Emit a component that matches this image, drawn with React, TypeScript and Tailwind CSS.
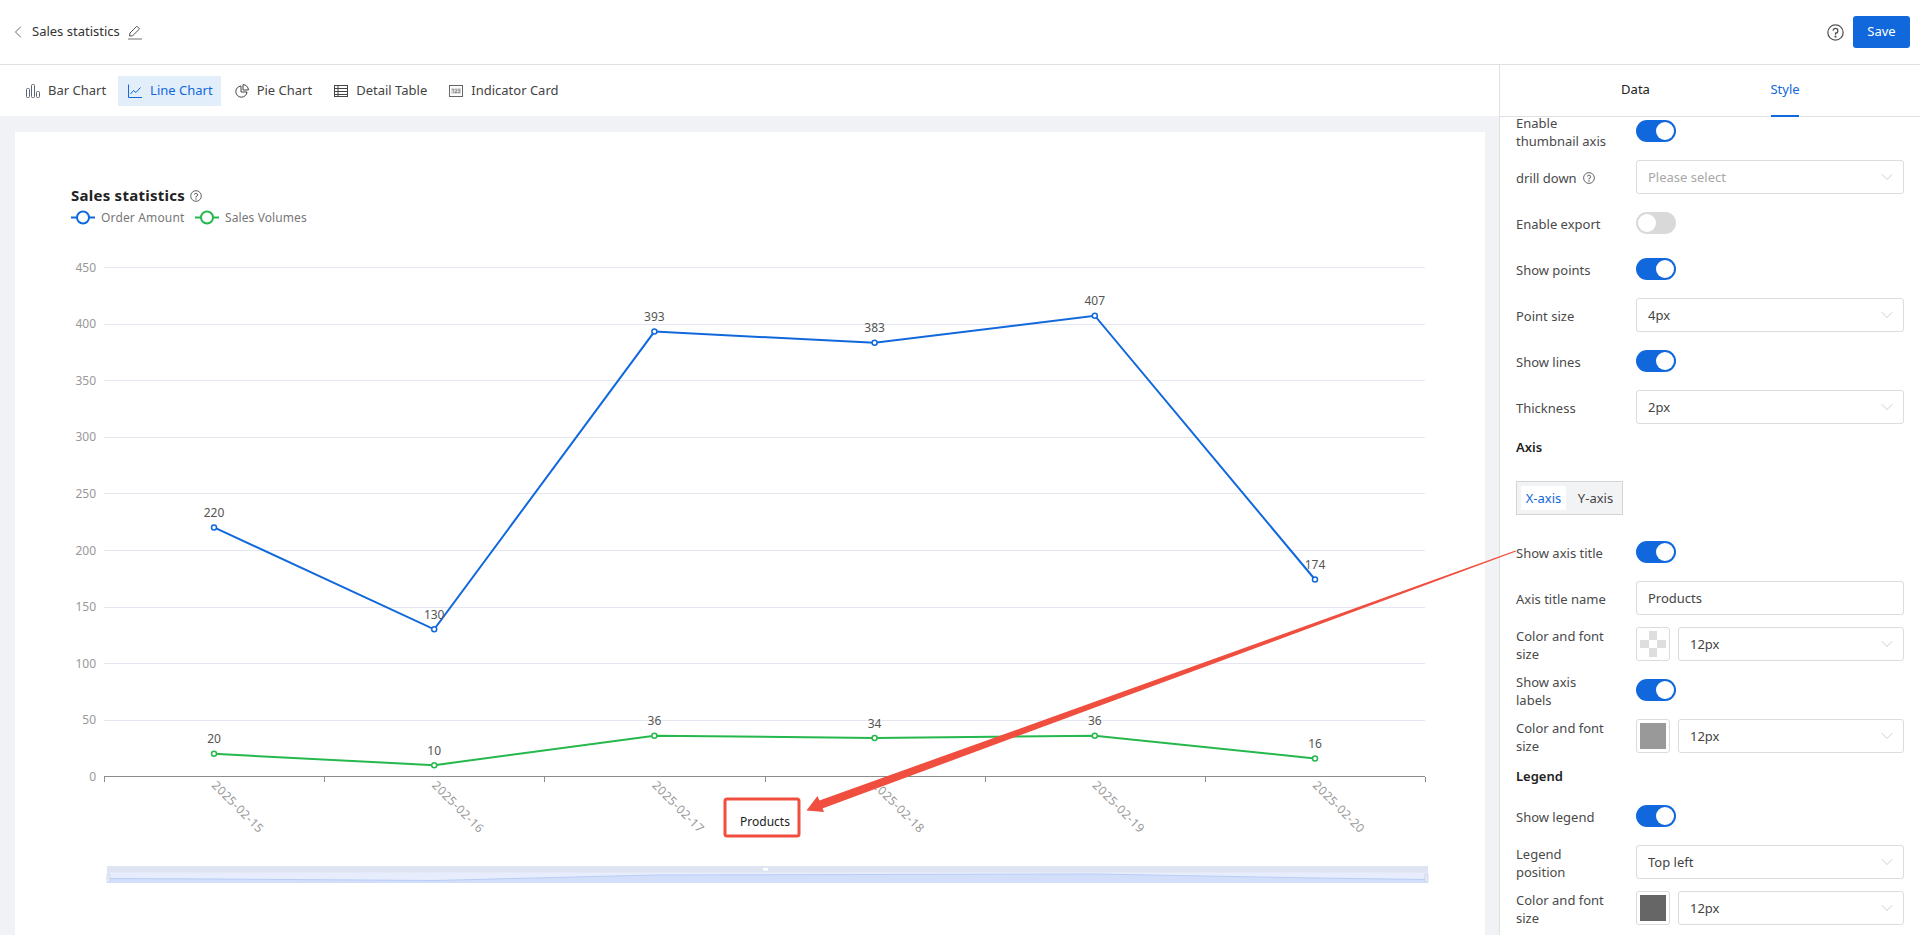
import { ChevronDown, ChevronLeft } from "lucide-react";
import type { ReactNode } from "react";

const BLUE = "#1068dc";
const GREEN = "#25b84c";
const FONT = "'Noto Sans', sans-serif";

const ORDER = [220, 130, 393, 383, 407, 174];
const SALES = [20, 10, 36, 34, 36, 16];
const DATES = ["2025-02-15", "2025-02-16", "2025-02-17", "2025-02-18", "2025-02-19", "2025-02-20"];
const TICKS = [0, 50, 100, 150, 200, 250, 300, 350, 400, 450];

const yAt = (v: number) => 776.5 - (v * 509.5) / 450;
const xAt = (i: number) => 214 + i * 220.2;
const points = (vals: number[]) => vals.map((v, i) => `${xAt(i)},${yAt(v)}`).join(" ");

function BarIcon() {
  return (
    <svg width="14" height="14" viewBox="0 0 14 14" fill="none" stroke="#5b6573" strokeWidth="1">
      <rect x="0.5" y="4.5" width="3" height="9" rx="1" />
      <rect x="5.5" y="0.5" width="3" height="13" rx="1" />
      <rect x="10.5" y="7.5" width="3" height="6" rx="1" />
    </svg>
  );
}

function LineIcon() {
  return (
    <svg width="14" height="14" viewBox="0 0 14 14" fill="none" stroke={BLUE} strokeWidth="1">
      <path d="M0.5 0.5V13.5H14" />
      <path d="M2.5 10L5.5 6.5L8 8.5L12.5 3.5" />
    </svg>
  );
}

function PieIcon() {
  return (
    <svg width="14" height="14" viewBox="0 0 14 14" fill="none" stroke="#444" strokeWidth="1">
      <path d="M6 2A5.6 5.6 0 1 0 12 8H6Z" />
      <path d="M8 0.6A5.5 5.5 0 0 1 13.4 6H8Z" />
    </svg>
  );
}

function TableIcon() {
  return (
    <svg width="14" height="14" viewBox="0 0 14 14" fill="none" stroke="#444" strokeWidth="1">
      <rect x="0.5" y="1.5" width="13" height="11" />
      <path d="M0.5 4.5H13.5M0.5 7.5H13.5M0.5 10.5H13.5M4 1.5V12.5" />
    </svg>
  );
}

function CardIcon() {
  return (
    <svg width="14" height="14" viewBox="0 0 14 14" fill="none">
      <rect x="0.5" y="1.5" width="13" height="11" stroke="#666" />
      <rect x="2" y="4" width="10" height="6" fill="#ddd" />
      <text x="7" y="9" textAnchor="middle" fontSize="5" fill="#555" fontFamily={FONT}>123</text>
    </svg>
  );
}

function Help({ size = 12 }: { size?: number }) {
  return (
    <svg width={size} height={size} viewBox="0 0 16 16" fill="none" stroke="#555" strokeWidth="1.2" className="shrink-0">
      <circle cx="8" cy="8" r="7.2" />
      <path d="M5.8 6.2A2.2 2.2 0 1 1 8 8.6V10" />
      <circle cx="8" cy="11.9" r="0.4" fill="#555" />
    </svg>
  );
}

function Toggle({ on = true }: { on?: boolean }) {
  return (
    <div className={`flex h-[22px] w-[40px] items-center rounded-full px-[2px] ${on ? "justify-end bg-[#1068dc]" : "justify-start bg-[#d9d9d9]"}`}>
      <div className="h-[18px] w-[18px] rounded-full bg-white" />
    </div>
  );
}

function Select({ value, muted }: { value: string; muted?: boolean }) {
  return (
    <div className="flex h-[34px] min-w-0 flex-1 items-center justify-between rounded-[3px] border border-[#dcdcdc] bg-white pr-[6px] pl-[11px]">
      <span className={`pt-[2px] ${muted ? "text-[#a8a8a8]" : "text-[#444]"}`}>{value}</span>
      <ChevronDown size={20} strokeWidth={0.8} className="text-[#b5b5b5]" />
    </div>
  );
}

function Input({ value }: { value: string }) {
  return (
    <div className="flex h-[34px] min-w-0 flex-1 items-center rounded-[3px] border border-[#dcdcdc] bg-white px-[11px]">
      <span className="pt-[1px] text-[#444]">{value}</span>
    </div>
  );
}

function Row({ label, children }: { label: ReactNode; children: ReactNode }) {
  return (
    <div className="mb-[12px] flex h-[34px] shrink-0 items-center">
      <div className="w-[120px] shrink-0 pt-[2px] pr-[24px] leading-[18px] text-[#4a4a4a]">{label}</div>
      <div className="flex min-w-0 flex-1 items-center gap-[8px]">{children}</div>
    </div>
  );
}

function Swatch({ color }: { color?: string }) {
  return (
    <div className="flex h-[34px] w-[34px] shrink-0 items-center justify-center rounded-[3px] border border-[#dcdcdc]">
      {color ? (
        <div className="h-[26px] w-[26px]" style={{ backgroundColor: color }} />
      ) : (
        <div className="grid h-[26px] w-[26px] grid-cols-3 grid-rows-3">
          <div /><div className="bg-[#dedede]" /><div />
          <div className="bg-[#dedede]" /><div /><div className="bg-[#dedede]" />
          <div /><div className="bg-[#dedede]" /><div />
        </div>
      )}
    </div>
  );
}

function Heading({ text }: { text: string }) {
  return <div className="mb-[12px] flex h-[22px] items-center pt-[2px] font-semibold text-[#222]">{text}</div>;
}

function TypeTab({ icon, text, active }: { icon: ReactNode; text: string; active?: boolean }) {
  return (
    <div className={`flex h-[30px] items-center gap-[8px] pr-[8px] pl-[10px] ${active ? "bg-[#e3eefb] text-[#1068dc]" : "text-[#444]"}`}>
      {icon}
      <span>{text}</span>
    </div>
  );
}

function ChartSvg() {
  // coordinates below are page coordinates, the svg starts at (15, 132)
  return (
    <svg width="1470" height="803" viewBox="15 132 1470 803" className="block" fontFamily={FONT}>
      <text x="71" y="201" fontSize="15" fontWeight="700" letterSpacing="0.25" fill="#222">Sales statistics</text>
      <g transform="translate(190 190)" fill="none" stroke="#555" strokeWidth="0.9">
        <circle cx="6" cy="6" r="5.3" />
        <path d="M4.4 4.7A1.6 1.6 0 1 1 6 6.5V7.6" />
        <circle cx="6" cy="9" r="0.3" />
      </g>

      <path d="M71 217.5H95" stroke={BLUE} strokeWidth="2" />
      <circle cx="83" cy="217.5" r="6" fill="#fff" stroke={BLUE} strokeWidth="2" />
      <text x="101" y="222" fontSize="12" letterSpacing="0.15" fill="#777">Order Amount</text>
      <path d="M195 217.5H219" stroke={GREEN} strokeWidth="2" />
      <circle cx="207" cy="217.5" r="6" fill="#fff" stroke={GREEN} strokeWidth="2" />
      <text x="225" y="222" fontSize="12" letterSpacing="0.1" fill="#777">Sales Volumes</text>

      {TICKS.map((t) => (
        <g key={t}>
          {t > 0 && <path d={`M104 ${Math.round(yAt(t)) + 0.5}H1425`} stroke="#e4e6f0" />}
          <text x="96" y={yAt(t) + 4.5} textAnchor="end" fontSize="12" fill="#999">{t}</text>
        </g>
      ))}

      <path d="M104 776.5H1425" stroke="#8c8c8c" />
      {[0, 1, 2, 3, 4, 5, 6].map((i) => {
        const x = Math.round(104 + i * 220.17) + 0.5;
        return <path key={i} d={`M${x} 777V782`} stroke="#8c8c8c" />;
      })}

      {DATES.map((d, i) => (
        <text key={d} transform={`translate(${xAt(i) - 3} 786) rotate(45)`} fontSize="12" letterSpacing="0.5" fill="#999">{d}</text>
      ))}

      <text x="765" y="826" textAnchor="middle" fontSize="12" fill="#222">Products</text>

      <polyline points={points(ORDER)} fill="none" stroke={BLUE} strokeWidth="2" />
      <polyline points={points(SALES)} fill="none" stroke={GREEN} strokeWidth="2" />
      {ORDER.map((v, i) => (
        <g key={i}>
          <circle cx={xAt(i)} cy={yAt(v)} r="2.5" fill="#fff" stroke={BLUE} strokeWidth="1.5" />
          <text x={xAt(i)} y={yAt(v) - 10.5} textAnchor="middle" fontSize="12" fill="#555">{v}</text>
        </g>
      ))}
      {SALES.map((v, i) => (
        <g key={i}>
          <circle cx={xAt(i)} cy={yAt(v)} r="2.5" fill="#fff" stroke={GREEN} strokeWidth="1.5" />
          <text x={xAt(i)} y={yAt(v) - 10.5} textAnchor="middle" fontSize="12" fill="#555">{v}</text>
        </g>
      ))}

      {/* thumbnail axis */}
      <rect x="107" y="866" width="1321" height="17" fill="#dfe4f2" />
      <rect x="107" y="872.5" width="1321" height="10.5" fill="#e7edfc" />
      <path
        d="M107 878.5 L214 879 L434 880.5 L655 875 L875 874.5 L1095 874 L1315 878 L1428 879.5 V883 H107 Z"
        fill="#d3dffa"
      />
      <path
        d="M107 878.5 L214 879 L434 880.5 L655 875 L875 874.5 L1095 874 L1315 878 L1428 879.5"
        fill="none"
        stroke="#b8cdf6"
      />
      <rect x="107" y="873.5" width="3" height="9" rx="1.5" fill="#e6ebf8" stroke="#c3cde4" strokeWidth="0.7" />
      <rect x="1425" y="873.5" width="3" height="9" rx="1.5" fill="#e6ebf8" stroke="#c3cde4" strokeWidth="0.7" />
      <rect x="763" y="868" width="5" height="2.5" fill="#fff" />
    </svg>
  );
}

export default function App() {
  return (
    <div className="relative h-[935px] w-[1920px] overflow-hidden bg-white text-[13px] text-[#333]" style={{ fontFamily: FONT }}>
      <header className="flex h-[65px] items-center justify-between border-b border-[#e0e0e0] pr-[10px] pl-[8px]">
        <div className="flex items-center">
          <ChevronLeft size={20} strokeWidth={1} className="text-[#444]" />
          <span className="ml-[4px] text-[#333]">Sales statistics</span>
          <svg width="14" height="15" viewBox="0 0 14 15" fill="none" stroke="#555" className="ml-[8px]">
            <path d="M1.5 11L2 8L8.8 1.2L11.5 3.9L4.7 10.7Z" strokeWidth="1" />
            <path d="M0 14H14" strokeWidth="1.2" stroke="#888" />
          </svg>
        </div>
        <div className="flex items-center gap-[9px]">
          <Help size={17} />
          <button className="h-[32px] w-[57px] rounded-[3px] bg-[#1068dc] text-white">Save</button>
        </div>
      </header>

      <div className="flex h-[870px]">
        <main className="flex min-w-0 flex-1 flex-col">
          <div className="flex h-[51px] shrink-0 items-center gap-[4px] pl-[16px]">
            <TypeTab icon={<BarIcon />} text="Bar Chart" />
            <TypeTab icon={<LineIcon />} text="Line Chart" active />
            <TypeTab icon={<PieIcon />} text="Pie Chart" />
            <TypeTab icon={<TableIcon />} text="Detail Table" />
            <TypeTab icon={<CardIcon />} text="Indicator Card" />
          </div>
          <div className="flex-1 overflow-hidden bg-[#f1f2f5] pt-[16px] pl-[15px]">
            <div className="w-[1470px] bg-white">
              <ChartSvg />
            </div>
          </div>
        </main>

        <aside className="flex w-[421px] shrink-0 flex-col border-l border-[#e0e0e0]">
          <div className="flex h-[52px] shrink-0 border-b border-[#e0e0e0]">
            <div className="flex w-[271px] items-center justify-center pb-[2px] text-[#222]">Data</div>
            <div className="relative flex w-[28px] items-center justify-center pb-[2px] text-[#1068dc]">
              Style
              <div className="absolute right-0 -bottom-px left-0 h-[2px] bg-[#1068dc]" />
            </div>
          </div>
          <div className="flex min-h-0 flex-1 flex-col pr-[16px] pl-[16px]">
            <div className="-mt-[3px]">
              <Row label="Enable thumbnail axis"><Toggle /></Row>
              <Row label={<span className="flex items-center gap-[6px]">drill down <Help /></span>}><Select value="Please select" muted /></Row>
              <Row label="Enable export"><Toggle on={false} /></Row>
              <Row label="Show points"><Toggle /></Row>
              <Row label="Point size"><Select value="4px" /></Row>
              <Row label="Show lines"><Toggle /></Row>
              <Row label="Thickness"><Select value="2px" /></Row>
              <Heading text="Axis" />
              <div className="mt-[23px] mb-[20px] flex h-[34px] w-[107px] items-center border border-[#d4d4d4] bg-[#f2f3f5] px-[4px]">
                <div className="flex h-[24px] w-[45px] items-center justify-center bg-white pt-[1px] text-[#1068dc]">X-axis</div>
                <div className="flex h-[24px] flex-1 items-center justify-center pt-[1px] pl-[7px] text-[#444]">Y-axis</div>
              </div>
              <Row label="Show axis title"><Toggle /></Row>
              <Row label="Axis title name"><Input value="Products" /></Row>
              <Row label="Color and font size"><Swatch /><Select value="12px" /></Row>
              <Row label="Show axis labels"><Toggle /></Row>
              <Row label="Color and font size"><Swatch color="#999999" /><Select value="12px" /></Row>
              <Heading text="Legend" />
              <Row label="Show legend"><Toggle /></Row>
              <Row label="Legend position"><Select value="Top left" /></Row>
              <Row label="Color and font size"><Swatch color="#666666" /><Select value="12px" /></Row>
            </div>
          </div>
        </aside>
      </div>

      {/* annotation drawn on top of the screenshot */}
      <svg width="1920" height="935" className="pointer-events-none absolute top-0 left-0">
        <rect x="725" y="799" width="74" height="37" rx="2" fill="none" stroke="#f04e3e" strokeWidth="3" />
        <polygon points="1515.5,550.5 1516,551.5 821,809 818,801" fill="#f04e3e" />
        <polygon points="806.5,810.5 817.5,796 824,812" fill="#f04e3e" />
      </svg>
    </div>
  );
}
